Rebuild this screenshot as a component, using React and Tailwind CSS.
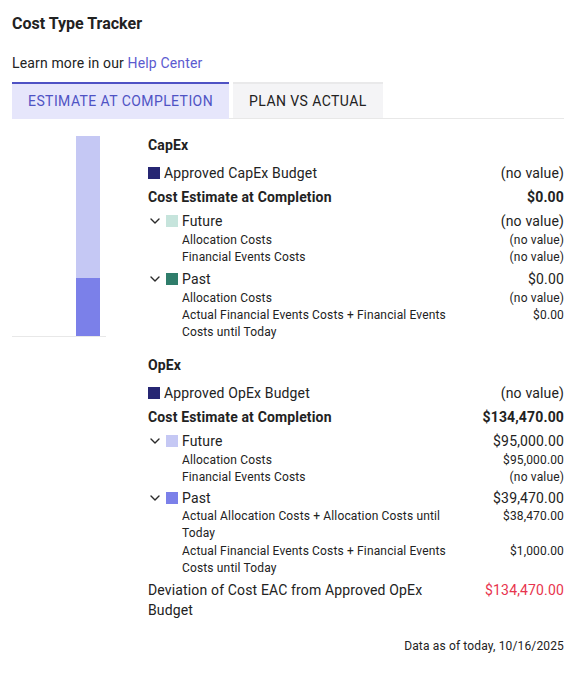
import React from "react";

const Chevron = () => (
  <svg width="10" height="6" viewBox="0 0 10 6" fill="none" stroke="#2b2b2b" strokeWidth="1.4" strokeLinecap="round" strokeLinejoin="round">
    <path d="M1 1l4 4 4-4" />
  </svg>
);

function MainRow({ label, value, bold, color, chevron }) {
  return (
    <div className={`flex justify-between items-center pt-[3px] pb-px text-[14px] leading-5 ${bold ? "font-bold" : ""}`}>
      <div className="flex items-center">
        {chevron && (
          <span className="w-[18px] pl-[2px] flex items-center">
            <Chevron />
          </span>
        )}
        {color && <span className="w-3 h-3 mr-1" style={{ backgroundColor: color }} />}
        <span>{label}</span>
      </div>
      <span>{value}</span>
    </div>
  );
}

function SubRow({ label, value }) {
  return (
    <div className="flex justify-between items-start pl-[34px] text-[12px] leading-[17px]">
      <span className="max-w-[272px]">{label}</span>
      <span className="text-right">{value}</span>
    </div>
  );
}

export default function App() {
  return (
    <div className="px-3 pt-3 pb-4 text-[#222222] bg-white tracking-[0.15px]" style={{ fontFamily: "Roboto, 'Noto Sans', sans-serif" }}>
      <h1 className="text-[16px] leading-6 font-bold tracking-normal">Cost Type Tracker</h1>
      <p className="mt-[17px] text-[14px] leading-5">
        Learn more in our <span className="text-[#5b5bd0]">Help Center</span>
      </p>
      <div className="mt-[9px] flex gap-1 border-b border-[#e8e8e8]">
        <div className="px-4 h-[37px] flex items-center border-t-2 border-[#4f52c4] bg-[#e6e6fb] text-[#4f53c4] text-[14px] tracking-[0.42px] -mb-px">
          ESTIMATE AT COMPLETION
        </div>
        <div className="px-4 h-[36px] flex items-center border-t-2 border-[#e9e9ea] bg-[#f4f4f6] text-[#222222] text-[14px] tracking-[0.42px]">
          PLAN VS ACTUAL
        </div>
      </div>

      <div className="mt-4 flex">
        <div className="w-[136px] shrink-0 pt-px">
          <div className="w-[94px] h-[201px] border-b border-[#e8e8e8] flex justify-end pr-[6px]">
            <div className="w-6 h-[200px] flex flex-col">
              <div className="h-[142px] bg-[#c5c8f4]" />
              <div className="flex-1 bg-[#7b80e9]" />
            </div>
          </div>
        </div>
        <div className="flex-1">
          <div className="text-[14px] leading-5 font-bold mb-[5px]">CapEx</div>
          <MainRow label="Approved CapEx Budget" value="(no value)" color="#262673" />
          <MainRow label="Cost Estimate at Completion" value="$0.00" bold />
          <MainRow label="Future" value="(no value)" color="#c6e4dc" chevron />
          <SubRow label="Allocation Costs" value="(no value)" />
          <SubRow label="Financial Events Costs" value="(no value)" />
          <MainRow label="Past" value="$0.00" color="#2f7d6b" chevron />
          <SubRow label="Allocation Costs" value="(no value)" />
          <SubRow label="Actual Financial Events Costs + Financial Events Costs until Today" value="$0.00" />
        </div>
      </div>

      <div className="mt-[14px] flex">
        <div className="w-[136px] shrink-0" />
        <div className="flex-1">
          <div className="text-[14px] leading-5 font-bold mb-[5px]">OpEx</div>
          <MainRow label="Approved OpEx Budget" value="(no value)" color="#262673" />
          <MainRow label="Cost Estimate at Completion" value="$134,470.00" bold />
          <MainRow label="Future" value="$95,000.00" color="#c5c8f4" chevron />
          <SubRow label="Allocation Costs" value="$95,000.00" />
          <SubRow label="Financial Events Costs" value="(no value)" />
          <div className="-mt-px">
            <MainRow label="Past" value="$39,470.00" color="#7b80e9" chevron />
          </div>
          <div className="-mt-px">
            <SubRow label="Actual Allocation Costs + Allocation Costs until Today" value="$38,470.00" />
          </div>
          <div className="mt-[1px]">
            <SubRow label="Actual Financial Events Costs + Financial Events Costs until Today" value="$1,000.00" />
          </div>
          <div className="mt-[3px] flex justify-between items-start text-[14px] leading-5">
            <span className="max-w-[290px]">Deviation of Cost EAC from Approved OpEx Budget</span>
            <span className="text-[#e8344e]">$134,470.00</span>
          </div>
          <div className="mt-[18px] text-right text-[12px] leading-[17px]">Data as of today, 10/16/2025</div>
        </div>
      </div>
    </div>
  );
}
